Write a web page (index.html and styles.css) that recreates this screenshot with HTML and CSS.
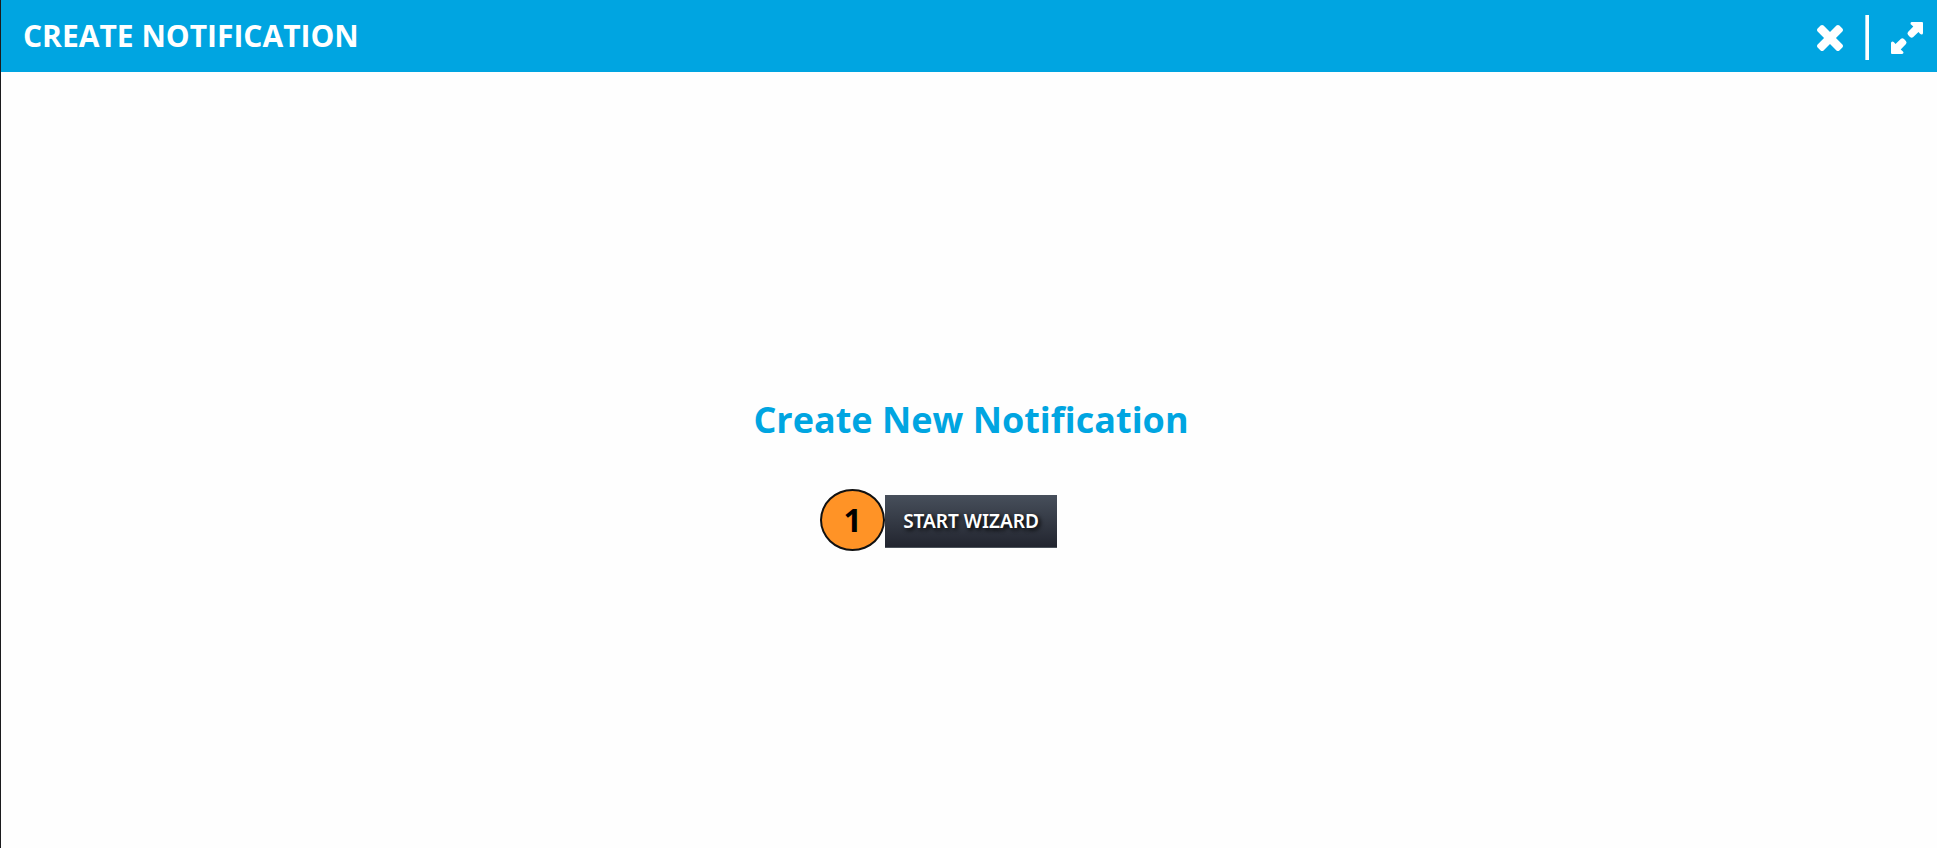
FILE: index.html
```html
<!DOCTYPE html>
<html lang="en">
<head>
<meta charset="utf-8">
<title>Create Notification</title>
<link rel="stylesheet" href="styles.css">
</head>
<body>
<div class="panel">
  <header class="panel-header">
    <h1 class="panel-title">CREATE NOTIFICATION</h1>
    <div class="panel-actions">
      <button class="icon-button close-button" type="button" aria-label="Close">
        <svg class="close-icon" viewBox="302 366 1188 1188" aria-hidden="true"><path d="M1490 1322q0 40-28 68l-136 136q-28 28-68 28t-68-28l-294-294-294 294q-28 28-68 28t-68-28l-136-136q-28-28-28-68t28-68l294-294-294-294q-28-28-28-68t28-68l136-136q28-28 68-28t68 28l294 294 294-294q28-28 68-28t68 28l136 136q28 28 28 68t-28 68l-294 294 294 294q28 28 28 68z"/></svg>
      </button>
      <span class="divider"></span>
      <button class="icon-button expand-button" type="button" aria-label="Expand">
        <svg class="expand-icon" viewBox="0 0 32 32" aria-hidden="true"><path d="M21 0H31Q32 0 32 1V11Q32 12.500 30.500 12.500Q29.800 12.500 29 11.800L27.500 10.100L22 15.200Q20.500 16.300 19 14.900L17.100 13Q15.800 11.500 17 10L22.300 4.500L20.300 2.800Q19.500 2 19.500 1.400Q19.500 0 21 0Z"/><path d="M11 32H1Q0 32 0 31V21Q0 19.500 1.500 19.500Q2.200 19.500 3 20.200L4.500 21.900L10 16.800Q11.500 15.700 13 17.100L14.900 19Q16.200 20.500 15 22L9.700 27.500L11.700 29.200Q12.500 30 12.500 30.600Q12.500 32 11 32Z"/></svg>
      </button>
    </div>
  </header>
  <main class="panel-body">
    <h2 class="heading">Create New Notification</h2>
    <div class="start">
      <button class="start-button" type="button">START WIZARD</button>
      <span class="step-badge">1</span>
    </div>
  </main>
</div>
</body>
</html>
```
FILE: styles.css
```css
* {
  box-sizing: border-box;
}

body {
  margin: 0;
  background: #fefefe;
  font-family: "Open Sans", "Noto Sans", sans-serif;
}

.panel {
  display: flex;
  flex-direction: column;
  min-height: 100vh;
  border-left: 1px solid #1b1b1d;
}

.panel-header {
  display: flex;
  align-items: center;
  justify-content: space-between;
  height: 72px;
  padding: 0 14px 0 22px;
  background: #00a5e1;
  color: #fff;
}

.panel-title {
  margin: 0;
  font-size: 30px;
  font-weight: 700;
  line-height: 72px;
}

.panel-actions {
  display: flex;
  align-items: center;
  gap: 22px;
  padding-top: 3px;
}

.icon-button {
  display: flex;
  padding: 0;
  border: 0;
  background: none;
  color: inherit;
  cursor: pointer;
}

.icon-button svg {
  fill: currentColor;
}

.close-icon {
  width: 26px;
  height: 26px;
}

.expand-icon {
  width: 32px;
  height: 32px;
}

.divider {
  width: 4px;
  height: 45px;
  background: #fff;
  border-left: 1px solid #a6def4;
}

.panel-body {
  display: flex;
  flex: 1;
  flex-direction: column;
  align-items: center;
  justify-content: center;
  gap: 50px;
  padding: 22px 0 0 4px;
}

.heading {
  margin: 0;
  color: #00a5e1;
  font-size: 36px;
  font-weight: 700;
  line-height: 50px;
}

.start {
  position: relative;
}

.start-button {
  display: block;
  padding: 12px 18px;
  border: 0;
  border-bottom: 1px solid #4c535b;
  background: linear-gradient(#474f5b, #22252f);
  color: #fff;
  font-family: "Noto Sans", sans-serif;
  font-size: 19px;
  font-weight: 600;
  line-height: 28px;
  text-shadow: 2px 2px 4px #000;
  cursor: pointer;
}

.step-badge {
  position: absolute;
  top: -6px;
  right: 100%;
  width: 65px;
  height: 62px;
  border: 2px solid #111;
  border-radius: 50%;
  background: #ff9326;
  color: #000;
  font-size: 32px;
  font-weight: 700;
  line-height: 58px;
  text-align: center;
}
```
